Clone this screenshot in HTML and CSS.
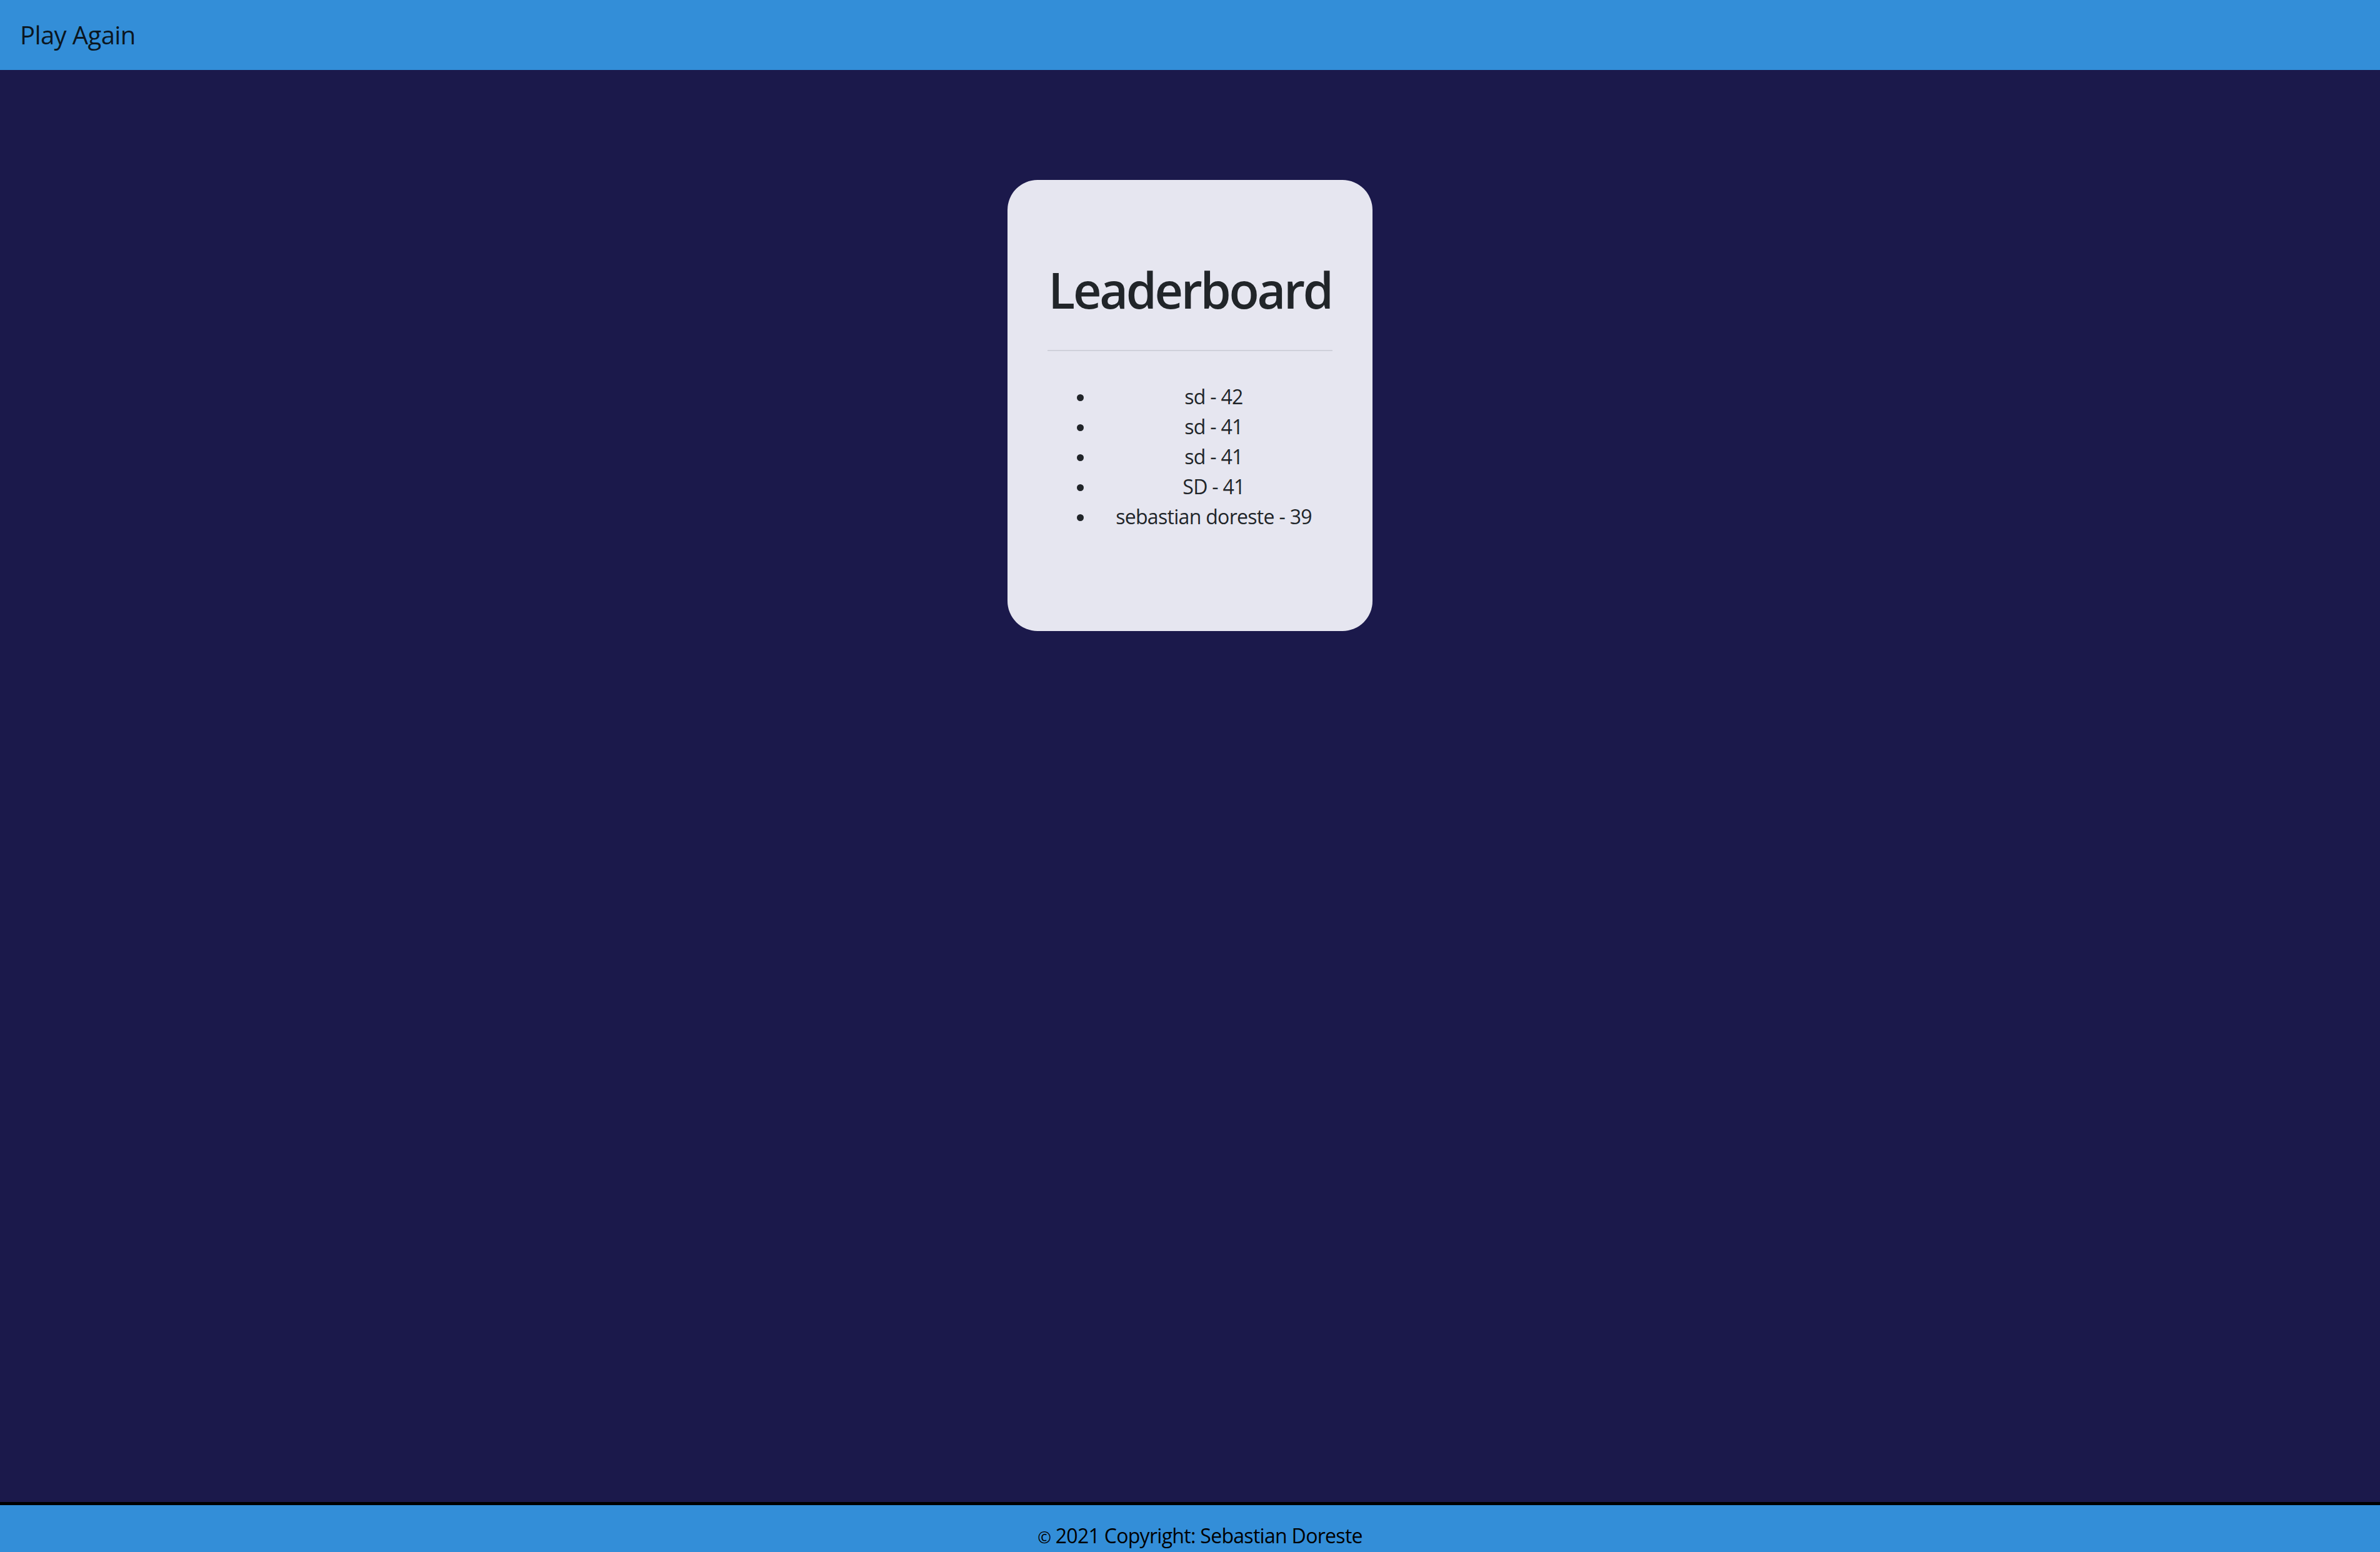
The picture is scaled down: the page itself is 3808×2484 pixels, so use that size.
FILE: index.html
```html
<!DOCTYPE html>
<html lang="en">
<head>
<meta charset="utf-8">
<title>Leaderboard</title>
<link rel="stylesheet" href="styles.css">
</head>
<body>
<header class="navbar">
  <a class="brand">Play Again</a>
</header>
<main class="main">
  <section class="card">
    <h1 class="title">Leaderboard</h1>
    <hr class="rule">
    <ul class="scores">
      <li>sd - 42</li>
      <li>sd - 41</li>
      <li>sd - 41</li>
      <li>SD - 41</li>
      <li>sebastian doreste - 39</li>
    </ul>
  </section>
</main>
<footer class="footer">
  <span class="copy">©</span> 2021 Copyright: Sebastian Doreste
</footer>
</body>
</html>
```
FILE: styles.css
```css
html, body {
  margin: 0;
  padding: 0;
}
body {
  background: #1b194b;
  color: #212529;
  font-family: "Open Sans", "Noto Sans", "DejaVu Sans", sans-serif;
  display: flex;
  flex-direction: column;
  height: 100vh;
  overflow: hidden;
}
.navbar {
  flex: none;
  height: 112px;
  box-sizing: border-box;
  background: #338ed8;
  display: flex;
  align-items: center;
  padding: 0 32px;
}
.brand {
  font-size: 40px;
  line-height: 60px;
  letter-spacing: -0.6px;
  color: #0b1620;
  text-decoration: none;
}
.main {
  flex: 1;
  display: flex;
  justify-content: center;
  align-items: flex-start;
  padding-top: 176px;
}
.card {
  width: 584px;
  box-sizing: border-box;
  background: #e6e6f0;
  border-radius: 48px;
  padding: 128px 64px 159px;
}
.title {
  margin: 0;
  font-size: 79px;
  line-height: 96px;
  font-weight: 600;
  letter-spacing: -3.3px;
  text-align: center;
  color: #212529;
}
.rule {
  margin: 48px 0 0;
  border: 0;
  border-top: 2px solid #cfd0da;
  height: 0;
}
.scores {
  margin: 49px 0 0;
  padding-left: 76px;
  list-style: disc;
  text-align: center;
  font-size: 32px;
  line-height: 48px;
  letter-spacing: -0.7px;
}
.footer {
  flex: none;
  height: 80px;
  box-sizing: border-box;
  border-top: 5px solid #000;
  background: #338ed8;
  color: #000;
  text-align: center;
  font-size: 32px;
  line-height: 48px;
  letter-spacing: -0.7px;
  padding: 25px 0 0 32px;
}
.copy {
  font-size: 26px;
}
```
